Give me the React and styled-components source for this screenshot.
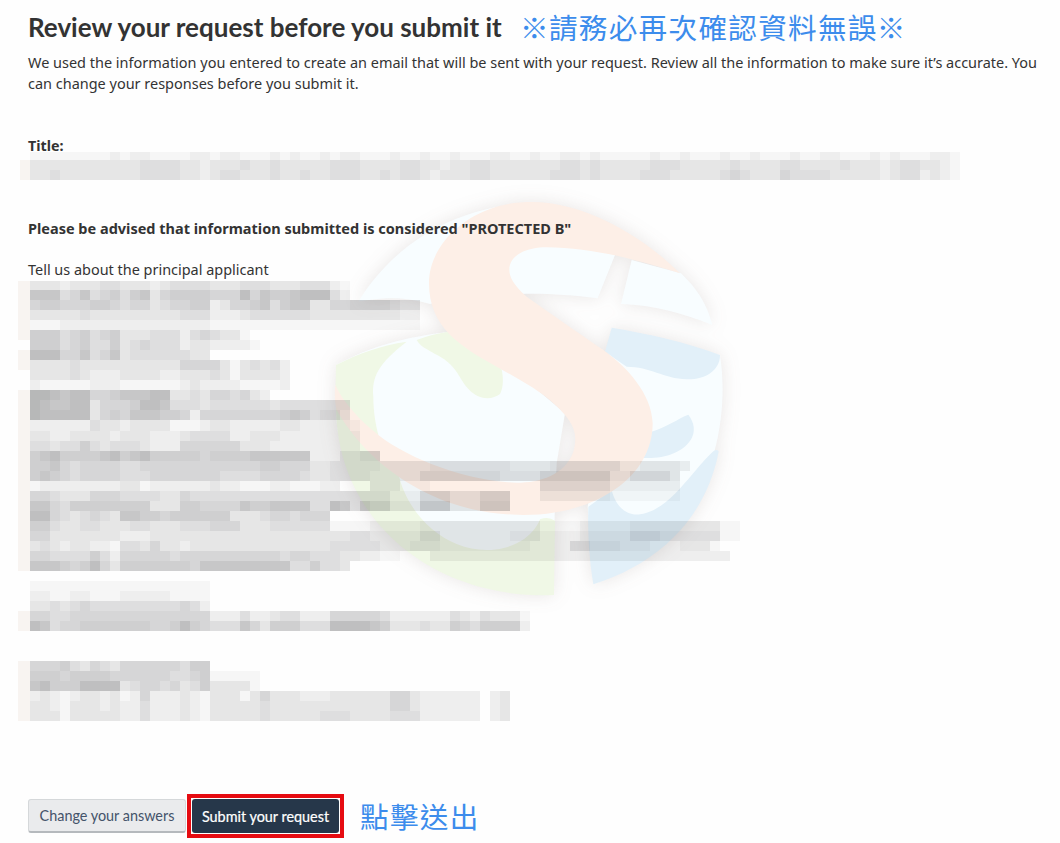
import React from 'react';
import styled, { createGlobalStyle } from 'styled-components';

const GlobalStyle = createGlobalStyle`
  * {
    box-sizing: border-box;
  }

  body {
    margin: 0;
    background: #fefefe;
    color: #333;
    font-family: 'Noto Sans', sans-serif;
  }
`;

// one character per block: 0 is clear, 9 is darkest, first one is the left edge
const titleRows = [
  '0111111112122111122122111212112122111211211211122112112212111112112111211211121122111212111221',
  '1333333333334444332333433433333444333344332334433333334434333334443333343333443333433323443321',
  '1334333333334444332344333433433444334344323334433333344434333344433333454333544443333323442321',
];

const bodyRows = [
  '133323334433323444433344433344421',
  '177745745646735666655585766788842',
  '1566555665455345566235567467733556666544',
  '1333334333333333444222344444433333333322',
  '1111222222222222222111111111111111111111',
  '16664564563334442454331',
  '06664564463454442332222100',
  '1888557457344444433',
  '133334333333333355553134342',
  '033334322233332233343133332',
  '021111122211111123222211112',
  '1998788556777883343554532',
  '198778835556887444344444434444444',
  '198888835657776652555555556764553',
  '1222222433233331112332222233222221',
  '1332233332333222344442233322222222',
  '1443446434443222555555333222222222',
  '167866667867866666566667777772224455',
  '166754555544555555555555665553344444333334444444433334444444223333200',
  '1676545555444555555544445555433444433333555555554444666666633555530',
  '11222222223312222223221112211122000333111000000000004444444222222200',
  '15543335554444335444444444444444444442225553335550002222222111111100',
  '1775466666666333665555766777744874766333777333666',
  '1885434543776656666663334554555',
  '1664334433344333444555333444444111122222333333333333111122222333333333110',
  '15533333332223333333333333333333344333335533333334442222333335554444441100',
  '134323322144353323333333333333344444333444333333333222255444333222333100',
  '155444464255555455555555554554443322110002222222222222222222222222222220',
  '177765685366666665777777777446443',
  '0',
  '0111111111111111111',
  '0221122111222221111',
  '0334345444444444542',
  '155445555555555555522242234422255555422222243243331',
  '187455666666655686544475366644488887633343365466662',
  '0',
  '0',
  '0',
  '1555643543555555466',
  '166656666555555445611111',
  '178666888834554534633331',
  '1232123323125222321333135333222333333553222222023',
  '1332133323224222321333334333333333333553222222023',
  '1333133333224222321333334333334443333444222222023',
];

const Mosaic = ({ rows, first }) => (
  <div>
    {rows.map((row, i) => (
      <MosaicRow key={i} $height={i === 0 ? first : i === 14 ? 11 : 10}>
        {row.split('').map((level, j) => (
          <Block key={j} $level={level} $edge={j === 0} />
        ))}
      </MosaicRow>
    ))}
  </div>
);

const Watermark = () => (
  <WatermarkSvg viewBox="0 0 1320 1290">
    <g fill="#f8fdff">
      <path d="M145 365C235 220 375 118 555 82L650 330L360 372C290 350 220 350 145 365Z" />
      <path d="M580 190H870L915 225L863 355C780 345 710 340 630 342Z" />
      <path d="M965 240L1113 280C1160 325 1190 370 1207 435C1120 400 1030 375 933 372Z" />
      <path d="M78 555C180 498 290 470 420 455L600 560L765 700L740 850L725 1245C350 1250 90 980 78 700Z" />
      <path d="M905 445L1230 525C1265 750 1190 1090 850 1213L833 980L880 700Z" />
    </g>
    <g fill="#f0f8e6">
      <path d="M78 555C145 520 215 496 290 485C205 550 185 590 190 650C190 700 198 735 205 765L215 810L76 650Z" />
      <path d="M320 480Q365 462 415 455L575 568C582 603 578 628 570 642C540 665 490 660 455 600C420 535 385 530 355 510Q330 498 320 480Z" />
      <path d="M78 640C120 740 190 790 265 880C290 1000 400 1110 530 1110C610 1110 670 1070 690 1018Q715 1008 735 1022L732 1245C380 1260 85 1030 78 690Z" />
    </g>
    <g fill="#e2f0f9">
      <path d="M905 443C1010 460 1130 487 1230 525C1230 575 1180 600 1130 598C1060 595 1020 560 950 560L885 515Z" />
      <path d="M1020 757C1070 742 1105 715 1135 704C1155 730 1155 755 1145 775C1120 820 1060 837 1000 834Z" />
      <path d="M905 930C920 990 960 1008 990 1003C1080 990 1140 880 1210 814Q1220 806 1226 814C1190 1010 1050 1150 850 1213C836 1130 833 1050 835 980Z" />
    </g>
    <path
      fill="#fdefe7"
      d="M1110 280C980 150 800 60 650 66C480 72 357 190 357 310C357 440 450 500 560 560C660 615 720 650 765 705C800 745 800 780 790 815C765 885 690 908 620 908C480 905 300 840 205 765C155 725 100 670 76 615C73 640 74 665 80 690C170 850 370 1005 640 1005C860 1005 1028 890 1028 730C1025 640 950 560 880 510C800 455 720 400 650 350C610 315 598 290 598 270C598 225 650 202 710 202C850 202 1000 245 1110 280Z"
    />
  </WatermarkSvg>
);

const App = () => {
  return (
    <Page>
      <GlobalStyle />
      <Watermark />
      <Content>
        <Header>
          <Heading>Review your request before you submit it</Heading>
          <Note>
            <Mark>※</Mark>請務必再次確認資料無誤<Mark>※</Mark>
          </Note>
        </Header>
        <Intro>
          We used the information you entered to create an email that will be sent with your
          request. Review all the information to make sure it’s accurate. You
          <br />
          can change your responses before you submit it.
        </Intro>
        <Label>Title:</Label>
        <TitleValue>
          <Mosaic rows={titleRows} first={8} />
        </TitleValue>
        <Advice>Please be advised that information submitted is considered "PROTECTED B"</Advice>
        <Question>Tell us about the principal applicant</Question>
        <Answers>
          <Mosaic rows={bodyRows} first={9} />
        </Answers>
        <Actions>
          <ChangeButton>Change your answers</ChangeButton>
          <Highlight>
            <SubmitButton>Submit your request</SubmitButton>
          </Highlight>
          <Note>點擊送出</Note>
        </Actions>
      </Content>
    </Page>
  );
};

const Page = styled.div`
  position: relative;
  width: 1060px;
  height: 843px;
  overflow: hidden;
`;

const WatermarkSvg = styled.svg`
  position: absolute;
  left: 310px;
  top: 180px;
  width: 440px;
  height: 430px;
  overflow: visible;
  filter: drop-shadow(0 0 9px rgba(90, 70, 60, 0.13));
`;

const Content = styled.div`
  position: relative;
  padding: 8px 0 0 28px;
`;

const Header = styled.div`
  display: flex;
  align-items: center;
  height: 38px;
`;

const Heading = styled.h1`
  width: 493px;
  margin: 0;
  font-family: Lato, sans-serif;
  font-size: 26px;
  font-weight: 700;
  line-height: 36px;
  white-space: nowrap;
`;

const Note = styled.span`
  color: #3c8cec;
  font-family: 'Noto Sans CJK TC', sans-serif;
  font-size: 28.6px;
  font-weight: 400;
  letter-spacing: 1.3px;
  line-height: 38px;
  white-space: nowrap;
`;

const Mark = styled.span`
  margin: 0 -1px;
`;

const Intro = styled.p`
  margin: 6px 0 0;
  font-size: 14.47px;
  line-height: 21px;
  white-space: nowrap;
`;

const Label = styled.div`
  height: 16px;
  margin-top: 42px;
  font-size: 14.3px;
  font-weight: 700;
  line-height: 20px;
`;

const TitleValue = styled.div`
  margin: 0 0 0 -8px;

  > div > div > :first-child {
    width: 10px;
  }
`;

const MosaicRow = styled.div`
  display: flex;
  height: ${(props) => props.$height}px;
`;

const Block = styled.span`
  flex: none;
  width: ${(props) => (props.$edge ? 12 : 10)}px;
  background: ${(props) =>
    props.$edge
      ? `rgba(150, 90, 40, ${props.$level * 0.06})`
      : `rgba(0, 2, 4, ${props.$level * 0.031})`};
`;

const Advice = styled.div`
  margin-top: 38px;
  font-size: 14.5px;
  font-weight: 700;
  line-height: 21px;
`;

const Question = styled.div`
  height: 22px;
  margin-top: 20px;
  font-size: 14.45px;
  line-height: 21px;
`;

const Answers = styled.div`
  margin-left: -10px;
`;

const Actions = styled.div`
  display: flex;
  align-items: center;
  height: 44px;
  margin-top: 73px;
`;

const Button = styled.button`
  height: 34px;
  padding: 0;
  border-radius: 3px;
  font-family: Lato, sans-serif;
  font-size: 14.4px;
  white-space: nowrap;
`;

const ChangeButton = styled(Button)`
  width: 158px;
  border: 1px solid #d5d8da;
  border-bottom: 2px solid #b5b9bd;
  background: #eaebed;
  color: #44536a;
`;

const Highlight = styled.div`
  width: 157px;
  height: 44px;
  margin: 0 16px 0 1px;
  padding: 1px;
  border: 4px solid #e60b11;
  background: #fff;
`;

const SubmitButton = styled(Button)`
  display: block;
  width: 147px;
  border: 0;
  background: #26374a;
  color: #fff;
  -webkit-text-stroke: 0.2px #fff;
`;

export default App;
